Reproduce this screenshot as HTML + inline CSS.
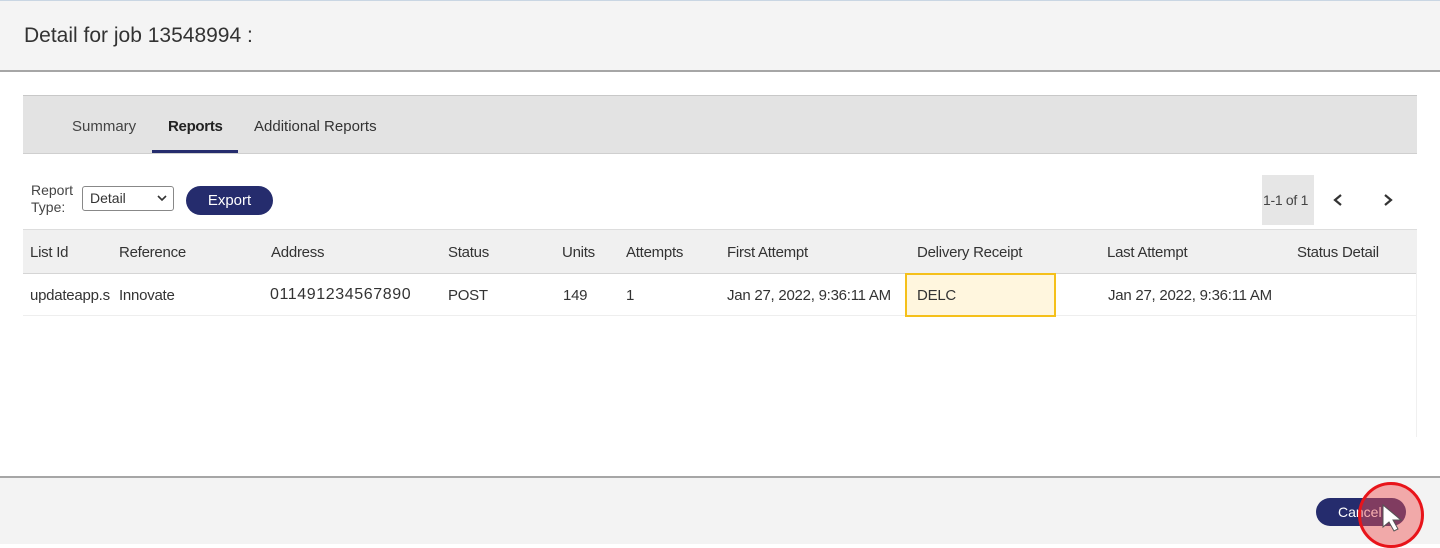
<!DOCTYPE html>
<html><head><style>
body{margin:0;width:1440px;height:544px;position:relative;overflow:hidden;font-family:"Liberation Sans",sans-serif;background:#fff;color:#333}
.a{position:absolute;white-space:nowrap}
.c{font-size:15px;letter-spacing:-0.25px;color:#333}
</style></head><body>
<div class="a" style="left:0;top:0;width:1440px;height:70px;background:#f4f4f4;border-top:1px solid #c9d6e3"></div>
<div class="a" style="left:0;top:70px;width:1440px;height:2px;background:#a6a6a6"></div>
<div class="a" style="left:24px;top:24px;font-size:21px;color:#333">Detail for job 13548994 :</div>

<div class="a" style="left:23px;top:95px;width:1394px;height:57px;background:#e3e3e3;border-top:1px solid #c8c8c8;border-bottom:1px solid #cfcfcf"></div>
<div class="a" style="left:72px;top:118px;font-size:15px;color:#444">Summary</div>
<div class="a" style="left:168px;top:118px;font-size:15px;font-weight:bold;color:#222;letter-spacing:-0.3px">Reports</div>
<div class="a" style="left:254px;top:118px;font-size:15px;color:#333">Additional Reports</div>
<div class="a" style="left:152px;top:150px;width:86px;height:3px;background:#252c6d"></div>

<div class="a" style="left:31px;top:182px;font-size:14px;line-height:17px;color:#444">Report<br>Type:</div>
<div class="a" style="left:82px;top:186px;width:90px;height:23px;border:1px solid #888;border-radius:3px;background:#fff"></div>
<div class="a" style="left:90px;top:190px;font-size:14px;color:#333">Detail</div>
<svg class="a" style="left:157px;top:195px" width="10" height="7"><path d="M1 1l4 4 4-4" stroke="#333" stroke-width="1.6" fill="none"/></svg>
<div class="a" style="left:186px;top:186px;width:87px;height:29px;border-radius:15px;background:#252c6d;color:#fff;font-size:15px;text-align:center;line-height:30px">Export</div>

<div class="a" style="left:1262px;top:175px;width:52px;height:50px;background:#e6e6e6"></div>
<div class="a" style="left:1263px;top:192px;font-size:14px;color:#444;letter-spacing:-0.3px">1-1 of 1</div>
<svg class="a" style="left:1332px;top:193px" width="12" height="14"><path d="M9 2L3 7l6 5" stroke="#333" stroke-width="2.2" fill="none"/></svg>
<svg class="a" style="left:1382px;top:193px" width="12" height="14"><path d="M3 2l6 5-6 5" stroke="#333" stroke-width="2.2" fill="none"/></svg>

<div class="a" style="left:23px;top:229px;width:1394px;height:43px;background:#f0f0f0;border-top:1px solid #ddd;border-bottom:1px solid #d5d5d5"></div>
<div class="a c" style="left:30px;top:244px">List Id</div>
<div class="a c" style="left:119px;top:244px">Reference</div>
<div class="a c" style="left:271px;top:244px">Address</div>
<div class="a c" style="left:448px;top:244px">Status</div>
<div class="a c" style="left:562px;top:244px">Units</div>
<div class="a c" style="left:626px;top:244px">Attempts</div>
<div class="a c" style="left:727px;top:244px">First Attempt</div>
<div class="a c" style="left:917px;top:244px">Delivery Receipt</div>
<div class="a c" style="left:1107px;top:244px">Last Attempt</div>
<div class="a c" style="left:1297px;top:244px">Status Detail</div>

<div class="a" style="left:23px;top:315px;width:1394px;height:1px;background:#eee"></div>
<div class="a" style="left:1416px;top:272px;width:1px;height:165px;background:#f0f0f0"></div>
<div class="a" style="left:905px;top:273px;width:147px;height:40px;background:#fff6de;border:2px solid #f5c01a"></div>
<div class="a c" style="left:30px;top:287px">updateapp.s</div>
<div class="a c" style="left:119px;top:287px">Innovate</div>
<div class="a c" style="left:270px;top:286px;font-size:16px;letter-spacing:0.6px">011491234567890</div>
<div class="a c" style="left:448px;top:287px">POST</div>
<div class="a c" style="left:563px;top:287px">149</div>
<div class="a c" style="left:626px;top:287px">1</div>
<div class="a c" style="left:727px;top:287px">Jan 27, 2022, 9:36:11 AM</div>
<div class="a c" style="left:917px;top:287px">DELC</div>
<div class="a c" style="left:1108px;top:287px">Jan 27, 2022, 9:36:11 AM</div>

<div class="a" style="left:0;top:476px;width:1440px;height:2px;background:#a6a6a6"></div>
<div class="a" style="left:0;top:478px;width:1440px;height:66px;background:#f3f3f3"></div>
<div class="a" style="left:1316px;top:498px;width:90px;height:28px;border-radius:14px;background:#252c6d;color:#fff;font-size:14px;line-height:28px;padding-left:22px;box-sizing:border-box">Cancel</div>
<div class="a" style="left:1358px;top:482px;width:60px;height:60px;border-radius:50%;border:3px solid #e8141a;background:rgba(240,80,80,0.45)"></div>
<svg class="a" style="left:1380px;top:503px" width="30" height="34"><path d="M3 2v22l6-5 5 9 4-2-5-9h8z" fill="#fff" stroke="#555" stroke-width="1"/></svg>
</body></html>
